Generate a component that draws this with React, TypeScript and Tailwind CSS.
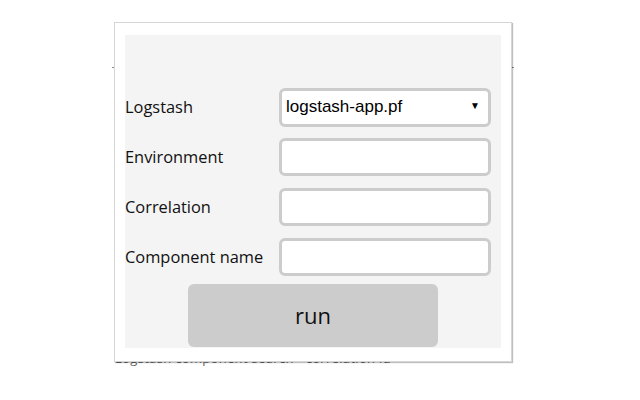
import { ChangeEvent, useState } from "react";

const fields = ["Environment", "Correlation", "Component name"];

const Field = ({ label }: { label: string }) => {
  const [value, setValue] = useState("");
  return (
    <div className="flex items-center h-[50px] shrink-0">
      <label className="w-[154px] shrink-0 text-[16.4px] text-[#111]">{label}</label>
      <input
        value={value}
        onChange={(e: ChangeEvent<HTMLInputElement>) => setValue(e.target.value)}
        className="w-[212px] h-[38px] rounded-[6px] border-[3px] border-[#cccccc] bg-white px-[4px] outline-none font-['Liberation_Sans',Arial,sans-serif] text-[17px]"
      />
    </div>
  );
};

const App = () => {
  return (
    <div className="relative w-[640px] h-[400px] bg-white overflow-hidden font-['Open_Sans','Noto_Sans',sans-serif]">
      {/* page underneath the dialog */}
      <div className="pt-[67px] pl-[112px] w-[514px]">
        <div className="h-[1px] bg-[#888]" />
        <p className="mt-[282px] ml-[3px] text-[13px] leading-[16px] text-[#666] tracking-wide">
          Logstash component search - correlation id
        </p>
      </div>

      <div className="absolute left-[114px] top-[22px] w-[398px] h-[340px] bg-white border border-[#d6d6d6] shadow-[1px_1px_1px_rgba(0,0,0,0.25)] px-[10px] pt-[12px]">
        <div className="bg-[#f4f4f4] h-[313px] pt-[47px] flex flex-col">
          <div className="flex items-center h-[50px] shrink-0">
            <label className="w-[154px] shrink-0 text-[16.4px] text-[#111]">Logstash</label>
            <div className="relative w-[212px] h-[39px] rounded-[6px] border-[3px] border-[#cccccc] bg-white flex items-center pl-[4px] font-['Liberation_Sans',Arial,sans-serif] text-[17px] text-black">
              logstash-app.pf
              <span className="absolute right-[8px] top-[10px] text-[10px] leading-none">▼</span>
            </div>
          </div>
          {fields.map((f) => (
            <Field key={f} label={f} />
          ))}
          <div className="flex justify-center mt-[2px]">
            <button className="w-[250px] h-[63px] rounded-[6px] bg-[#cccccc] text-[22px] text-[#111]">
              run
            </button>
          </div>
        </div>
      </div>
    </div>
  );
};

export default App;
